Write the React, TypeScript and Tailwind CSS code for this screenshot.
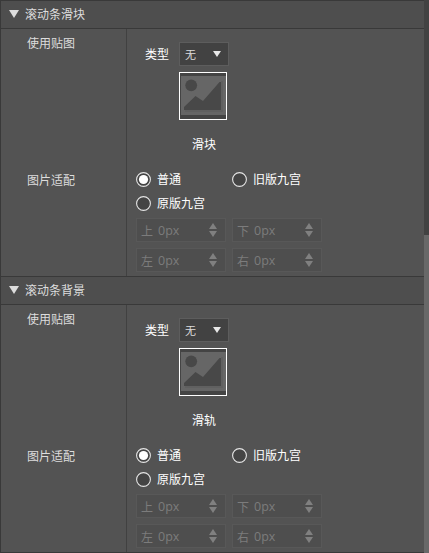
import React from 'react';

function Stepper() {
  return (
    <svg width="8" height="14" viewBox="0 0 8 14" className="shrink-0 fill-[#808080]">
      <path d="M4 0 8 6H0Z" />
      <path d="M0 8h8l-4 6Z" />
    </svg>
  );
}

function NumberField({ label }: { label: string }) {
  return (
    <div className="flex h-6 w-[90px] items-center border border-[#585858] bg-[#4e4e4e] pl-1 pr-2 text-[#7c7c7c]">
      <span className="w-[17px] pt-px text-[12px]">{label}</span>
      <span className="flex-1 pt-[2px] font-['Open_Sans',sans-serif] text-[12.5px]">0px</span>
      <Stepper />
    </div>
  );
}

function Radio({ label, checked = false }: { label: string; checked?: boolean }) {
  return (
    <div className="flex h-6 w-24 items-center gap-[6px] text-white">
      <svg width="15" height="15" viewBox="0 0 15 15" className="shrink-0">
        <circle cx="7.5" cy="7.5" r="6.9" fill="#444444" stroke="#e6e6e6" strokeWidth="1.1" />
        {checked && <circle cx="7.5" cy="7.5" r="4.6" fill="#ffffff" />}
      </svg>
      <span className="whitespace-nowrap">{label}</span>
    </div>
  );
}

function Thumbnail() {
  return (
    <div className="size-12 border border-white bg-[#444444]">
      <svg width="46" height="46" viewBox="0 0 46 46">
        <rect x="1" y="3" width="45" height="39" fill="#666666" />
        <path d="M41 8h2v31H5v-2h36Z" fill="#606060" />
        <circle cx="11.2" cy="12.3" r="5.9" fill="#484848" />
        <path d="M4 37v-3L15.5 23l7.5 5L39.5 9H41v28Z" fill="#484848" />
      </svg>
    </div>
  );
}

function Section({ title, part }: { title: string; part: string }) {
  return (
    <section className="h-[276px] border-t border-[#393939]">
      <header className="flex h-7 items-center gap-[6px] border-b border-[#393939] bg-[#4e4e4e] pb-px pl-2">
        <svg width="10" height="8" viewBox="0 0 10 8" className="fill-[#dddddd]">
          <path d="M0 0h10L5 8Z" />
        </svg>
        <span>{title}</span>
      </header>
      <div className="flex h-[247px]">
        <div className="w-[126px] shrink-0 border-r border-[#414141] pl-[26px]">
          <div className="flex h-[137px] items-start pt-[5px] leading-[18px]">使用贴图</div>
          <div className="pt-[5px] leading-[18px]">图片适配</div>
        </div>
        <div className="flex-1 pl-[9px] pt-[13px]">
          <div className="flex h-6 items-center pl-[9px] text-white">
            <span className="w-[34px]">类型</span>
            <div className="flex h-6 w-[50px] items-center justify-between border border-[#5d5d5d] bg-[#424242] pl-[5px] pr-[7px]">
              <span className="text-[11px] text-[#dddddd]">无</span>
              <svg width="8" height="6" viewBox="0 0 8 6" className="fill-[#e8e8e8]">
                <path d="M0 0h8L4 6Z" />
              </svg>
            </div>
          </div>
          <div className="ml-[43px] flex w-[50px] flex-col pt-[6px]">
            <Thumbnail />
            <span className="mt-[15px] text-center leading-[18px] text-white">{part}</span>
          </div>
          <div className="mt-[14px] flex w-48 flex-wrap">
            <Radio label="普通" checked />
            <Radio label="旧版九宫" />
            <Radio label="原版九宫" />
          </div>
          <div className="mt-[3px] grid grid-cols-[90px_90px] gap-[6px]">
            <NumberField label="上" />
            <NumberField label="下" />
            <NumberField label="左" />
            <NumberField label="右" />
          </div>
        </div>
      </div>
    </section>
  );
}

export default function App() {
  return (
    <div className="flex h-[553px] w-[429px] overflow-hidden bg-[#535353] font-['Noto_Sans_CJK_SC',sans-serif] text-[12px] leading-none text-[#dddddd]">
      <main className="w-[424px] border-b border-l border-[#393939]">
        <Section title="滚动条滑块" part="滑块" />
        <Section title="滚动条背景" part="滑轨" />
      </main>
      <aside className="w-[5px] bg-[#424242] pt-[235px]">
        <div className="h-[318px] bg-[#686868]" />
      </aside>
    </div>
  );
}
